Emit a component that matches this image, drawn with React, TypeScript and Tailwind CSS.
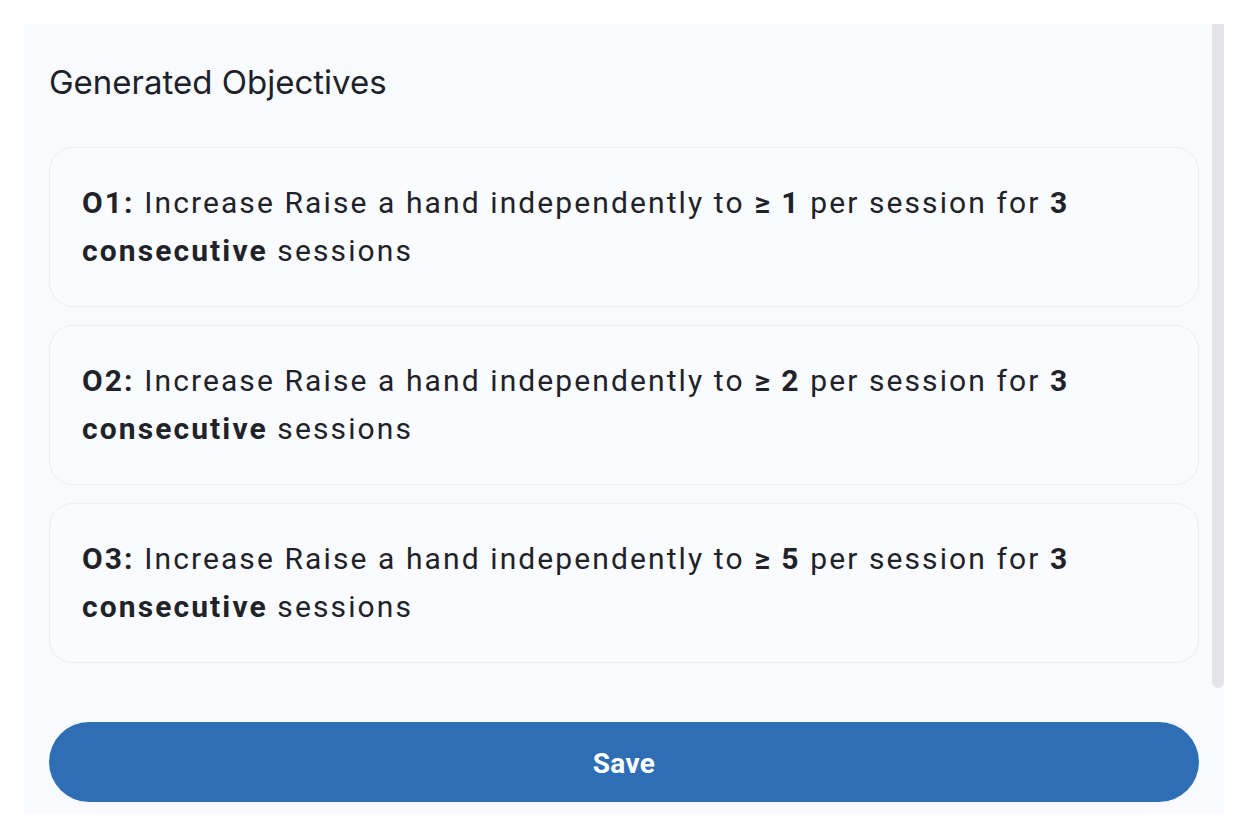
const objectives = [
  { id: "O1", target: "1" },
  { id: "O2", target: "2" },
  { id: "O3", target: "5" },
];

export default function App() {
  return (
    <div className="min-h-screen bg-white pt-6 pl-6">
      <div className="w-[1200px] h-[790px] bg-[#f9fafe] flex flex-col">
        <div className="flex h-[664px]">
          <div className="flex-1 pl-[25px] pr-[13px]">
            <h2 className="mt-[38px] text-[33px] leading-[40px] text-[#1d2129] font-['Inter',sans-serif] tracking-[0px]">
              Generated Objectives
            </h2>
            <div className="mt-[45px] flex flex-col gap-[18px]">
              {objectives.map((o) => (
                <div
                  key={o.id}
                  className="h-[160px] rounded-[24px] border border-[#eceef3] bg-[#fafbff] px-[32px] py-[31px] font-['Roboto',sans-serif] text-[30px] leading-[48px] tracking-[2.1px] text-[#1f2329]"
                >
                  <span className="font-bold">{o.id}:</span> Increase Raise a hand
                  independently to <span className="font-bold">≥ {o.target}</span> per
                  session for <span className="font-bold">3 consecutive</span> sessions
                </div>
              ))}
            </div>
          </div>
          <div className="w-[12px] bg-[#e4e4e8] rounded-b-[6px]" />
        </div>
        <div className="px-[25px] pt-[34px]">
          <button className="w-full h-[80px] pt-[3px] rounded-full bg-[#2e6eb5] text-white font-['Roboto',sans-serif] font-bold text-[28px] tracking-[0.4px]">
            Save
          </button>
        </div>
      </div>
    </div>
  );
}
